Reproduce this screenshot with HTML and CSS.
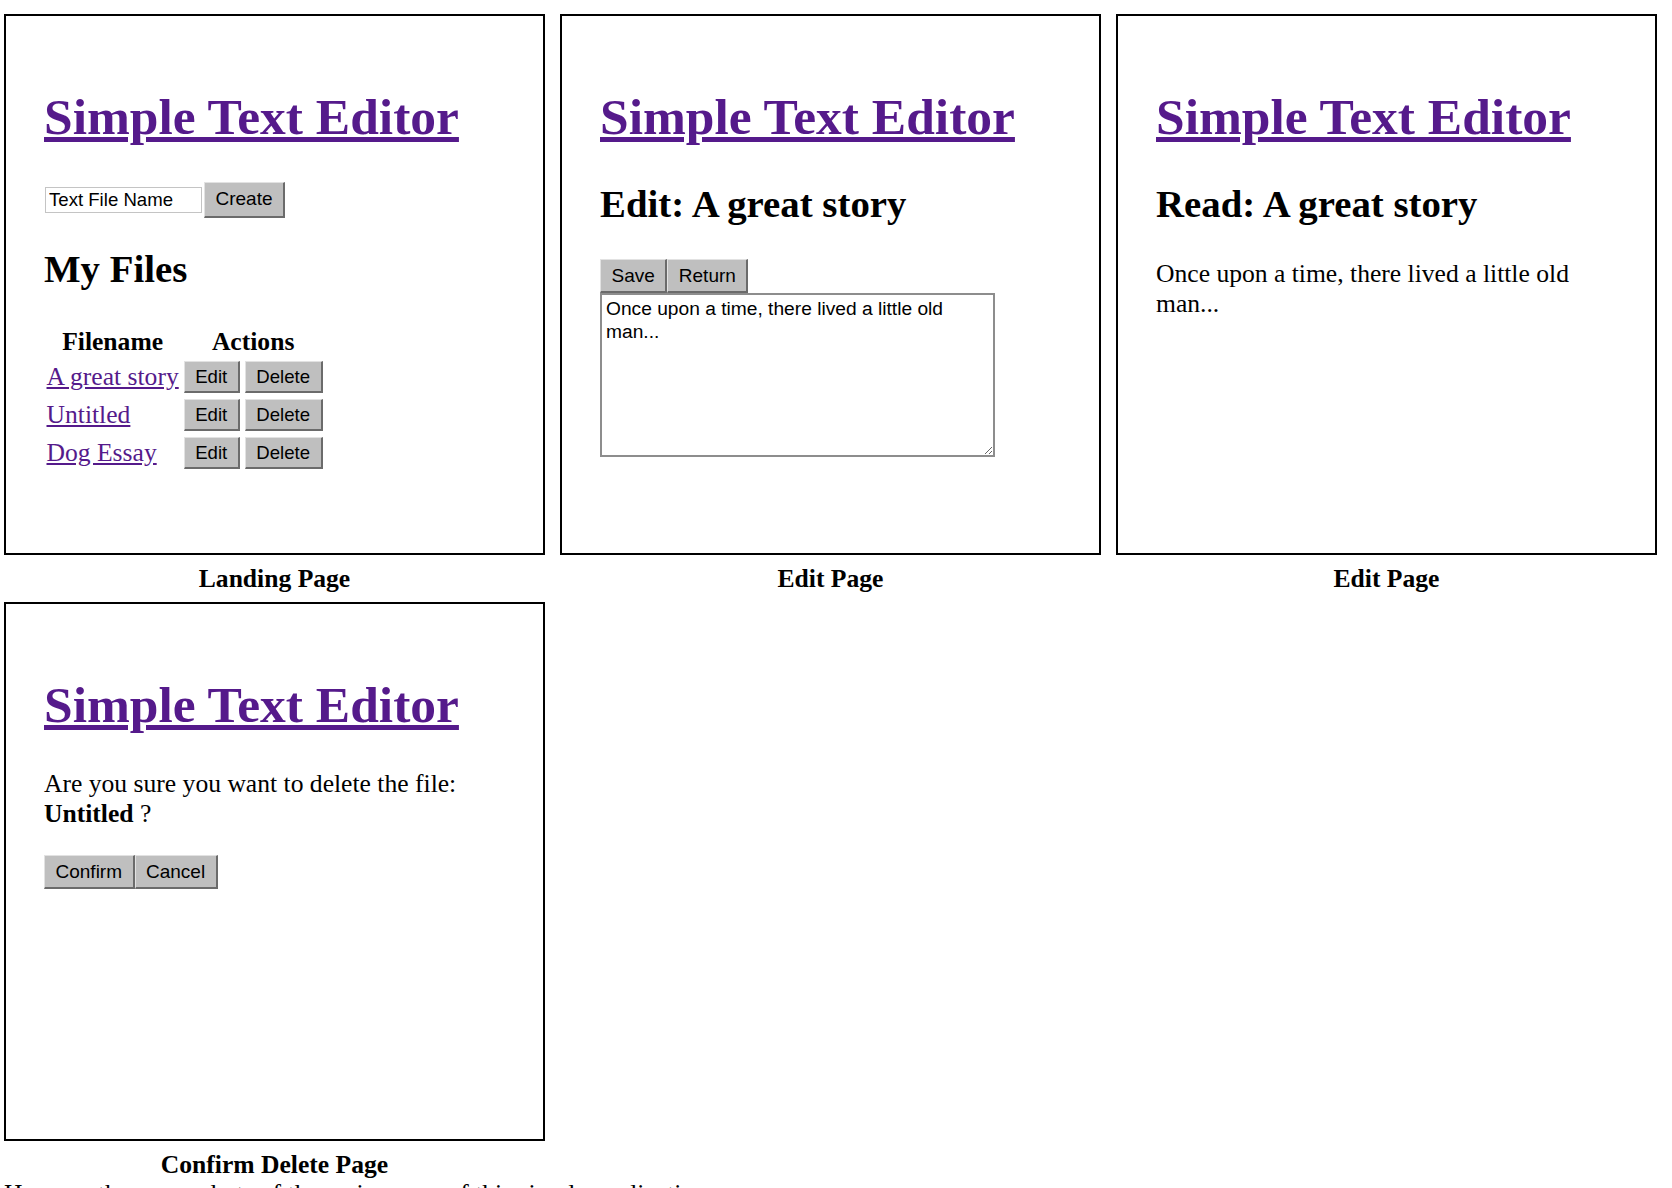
FILE: index.html
```html
<!DOCTYPE html>
<html lang="en">
<head>
<meta charset="utf-8">
<title>Simple Text Editor – Pages</title>
<link rel="stylesheet" href="styles.css">
</head>
<body>
<div class="gallery">
  <div class="figure">
    <div class="screen">
      <h1 class="app-title"><a href="#">Simple Text Editor</a></h1>
      <form class="create-form">
        <input class="name-input" type="text" value="Text File Name">
        <button class="btn" type="button">Create</button>
      </form>
      <h2 class="section-title files-title">My Files</h2>
      <table class="files">
        <thead>
          <tr><th>Filename</th><th colspan="2">Actions</th></tr>
        </thead>
        <tbody>
          <tr><td><a href="#">A great story</a></td><td><button class="btn" type="button">Edit</button></td><td><button class="btn" type="button">Delete</button></td></tr>
          <tr><td><a href="#">Untitled</a></td><td><button class="btn" type="button">Edit</button></td><td><button class="btn" type="button">Delete</button></td></tr>
          <tr><td><a href="#">Dog Essay</a></td><td><button class="btn" type="button">Edit</button></td><td><button class="btn" type="button">Delete</button></td></tr>
        </tbody>
      </table>
    </div>
    <div class="caption">Landing Page</div>
  </div>

  <div class="figure">
    <div class="screen">
      <h1 class="app-title"><a href="#">Simple Text Editor</a></h1>
      <h2 class="section-title">Edit: A great story</h2>
      <div class="toolbar">
        <button class="btn" type="button">Save</button><button class="btn" type="button">Return</button>
      </div>
      <textarea class="editor">Once upon a time, there lived a little old man...</textarea>
    </div>
    <div class="caption">Edit Page</div>
  </div>

  <div class="figure">
    <div class="screen">
      <h1 class="app-title"><a href="#">Simple Text Editor</a></h1>
      <h2 class="section-title">Read: A great story</h2>
      <p class="body-text">Once upon a time, there lived a little old man...</p>
    </div>
    <div class="caption">Edit Page</div>
  </div>

  <div class="figure">
    <div class="screen screen-short">
      <h1 class="app-title"><a href="#">Simple Text Editor</a></h1>
      <p class="body-text confirm-text">Are you sure you want to delete the file: <b>Untitled</b> ?</p>
      <div class="toolbar">
        <button class="btn" type="button">Confirm</button><button class="btn" type="button">Cancel</button>
      </div>
    </div>
    <div class="caption">Confirm Delete Page</div>
  </div>
</div>
<p class="note">Here are the screenshots of the main pages of this simple application.</p>
</body>
</html>
```

FILE: styles.css
```css
* {
  box-sizing: border-box;
}

body {
  margin: 0;
  padding: 14px 0 0 4px;
  font-family: "Liberation Serif", "Times New Roman", serif;
  font-size: 25.6px;
  color: #000;
  background: #fff;
}

.gallery {
  display: flex;
  flex-wrap: wrap;
  column-gap: 15px;
  row-gap: 9px;
  width: 1660px;
}

.figure {
  width: 541px;
}

.screen {
  height: 541px;
  border: 2px solid #000;
  padding: 37px 37px 0 38px;
  overflow: hidden;
}

.screen-short {
  height: 539px;
}

.caption {
  padding-top: 9px;
  line-height: 29px;
  font-weight: bold;
  text-align: center;
}

.app-title {
  font-size: 51.5px;
  font-weight: bold;
  margin: 34.3px 0;
}

.app-title a,
.files a {
  color: #551a8b;
  text-decoration: underline;
}

.section-title {
  font-size: 38.8px;
  font-weight: bold;
  margin: 31.9px 0 33.5px 0;
}

.files-title {
  margin: 28.5px 0 34px 0;
}

.create-form {
  display: flex;
  align-items: center;
  gap: 2px;
  margin: 36px 0 0 1px;
}

.name-input {
  width: 157px;
  height: 25.5px;
  margin: 0;
  padding: 1px 3px;
  border: 1px solid #c4c4c4;
  font-family: "Liberation Sans", Arial, sans-serif;
  font-size: 18.6px;
  color: #000;
  background: #fff;
  outline: none;
}

.btn {
  margin: 0;
  padding: 4px 10.5px;
  font-family: "Liberation Sans", Arial, sans-serif;
  font-size: 19px;
  line-height: 23px;
  color: #000;
  background: #bfbfbf;
  border-style: solid;
  border-width: 1px 2px 2px 1px;
  border-color: #e2e2e2 #6b6b6b #6b6b6b #e2e2e2;
  border-radius: 0;
}

.create-form .btn {
  line-height: 24.5px;
}

.files {
  border-spacing: 3.2px;
  margin-left: -1.5px;
}

.files th {
  padding: 1px;
  line-height: 26px;
  font-weight: bold;
  text-align: center;
}

.files td {
  padding: 1px;
  vertical-align: middle;
}

.files .btn {
  padding: 4px 10.5px;
  font-size: 18.6px;
  line-height: 21px;
}

.toolbar {
  display: flex;
}

.editor {
  display: block;
  width: 395px;
  height: 164px;
  margin: 0;
  padding: 3px 4px;
  border: 2px solid #8d8d8d;
  font-family: "Liberation Sans", Arial, sans-serif;
  font-size: 19.2px;
  line-height: 22.6px;
  color: #000;
  background: #fff;
  resize: both;
}

.body-text {
  margin: 25.6px 0;
}

.confirm-text {
  margin-bottom: 26.6px;
}

.note {
  margin: 0;
}
```
